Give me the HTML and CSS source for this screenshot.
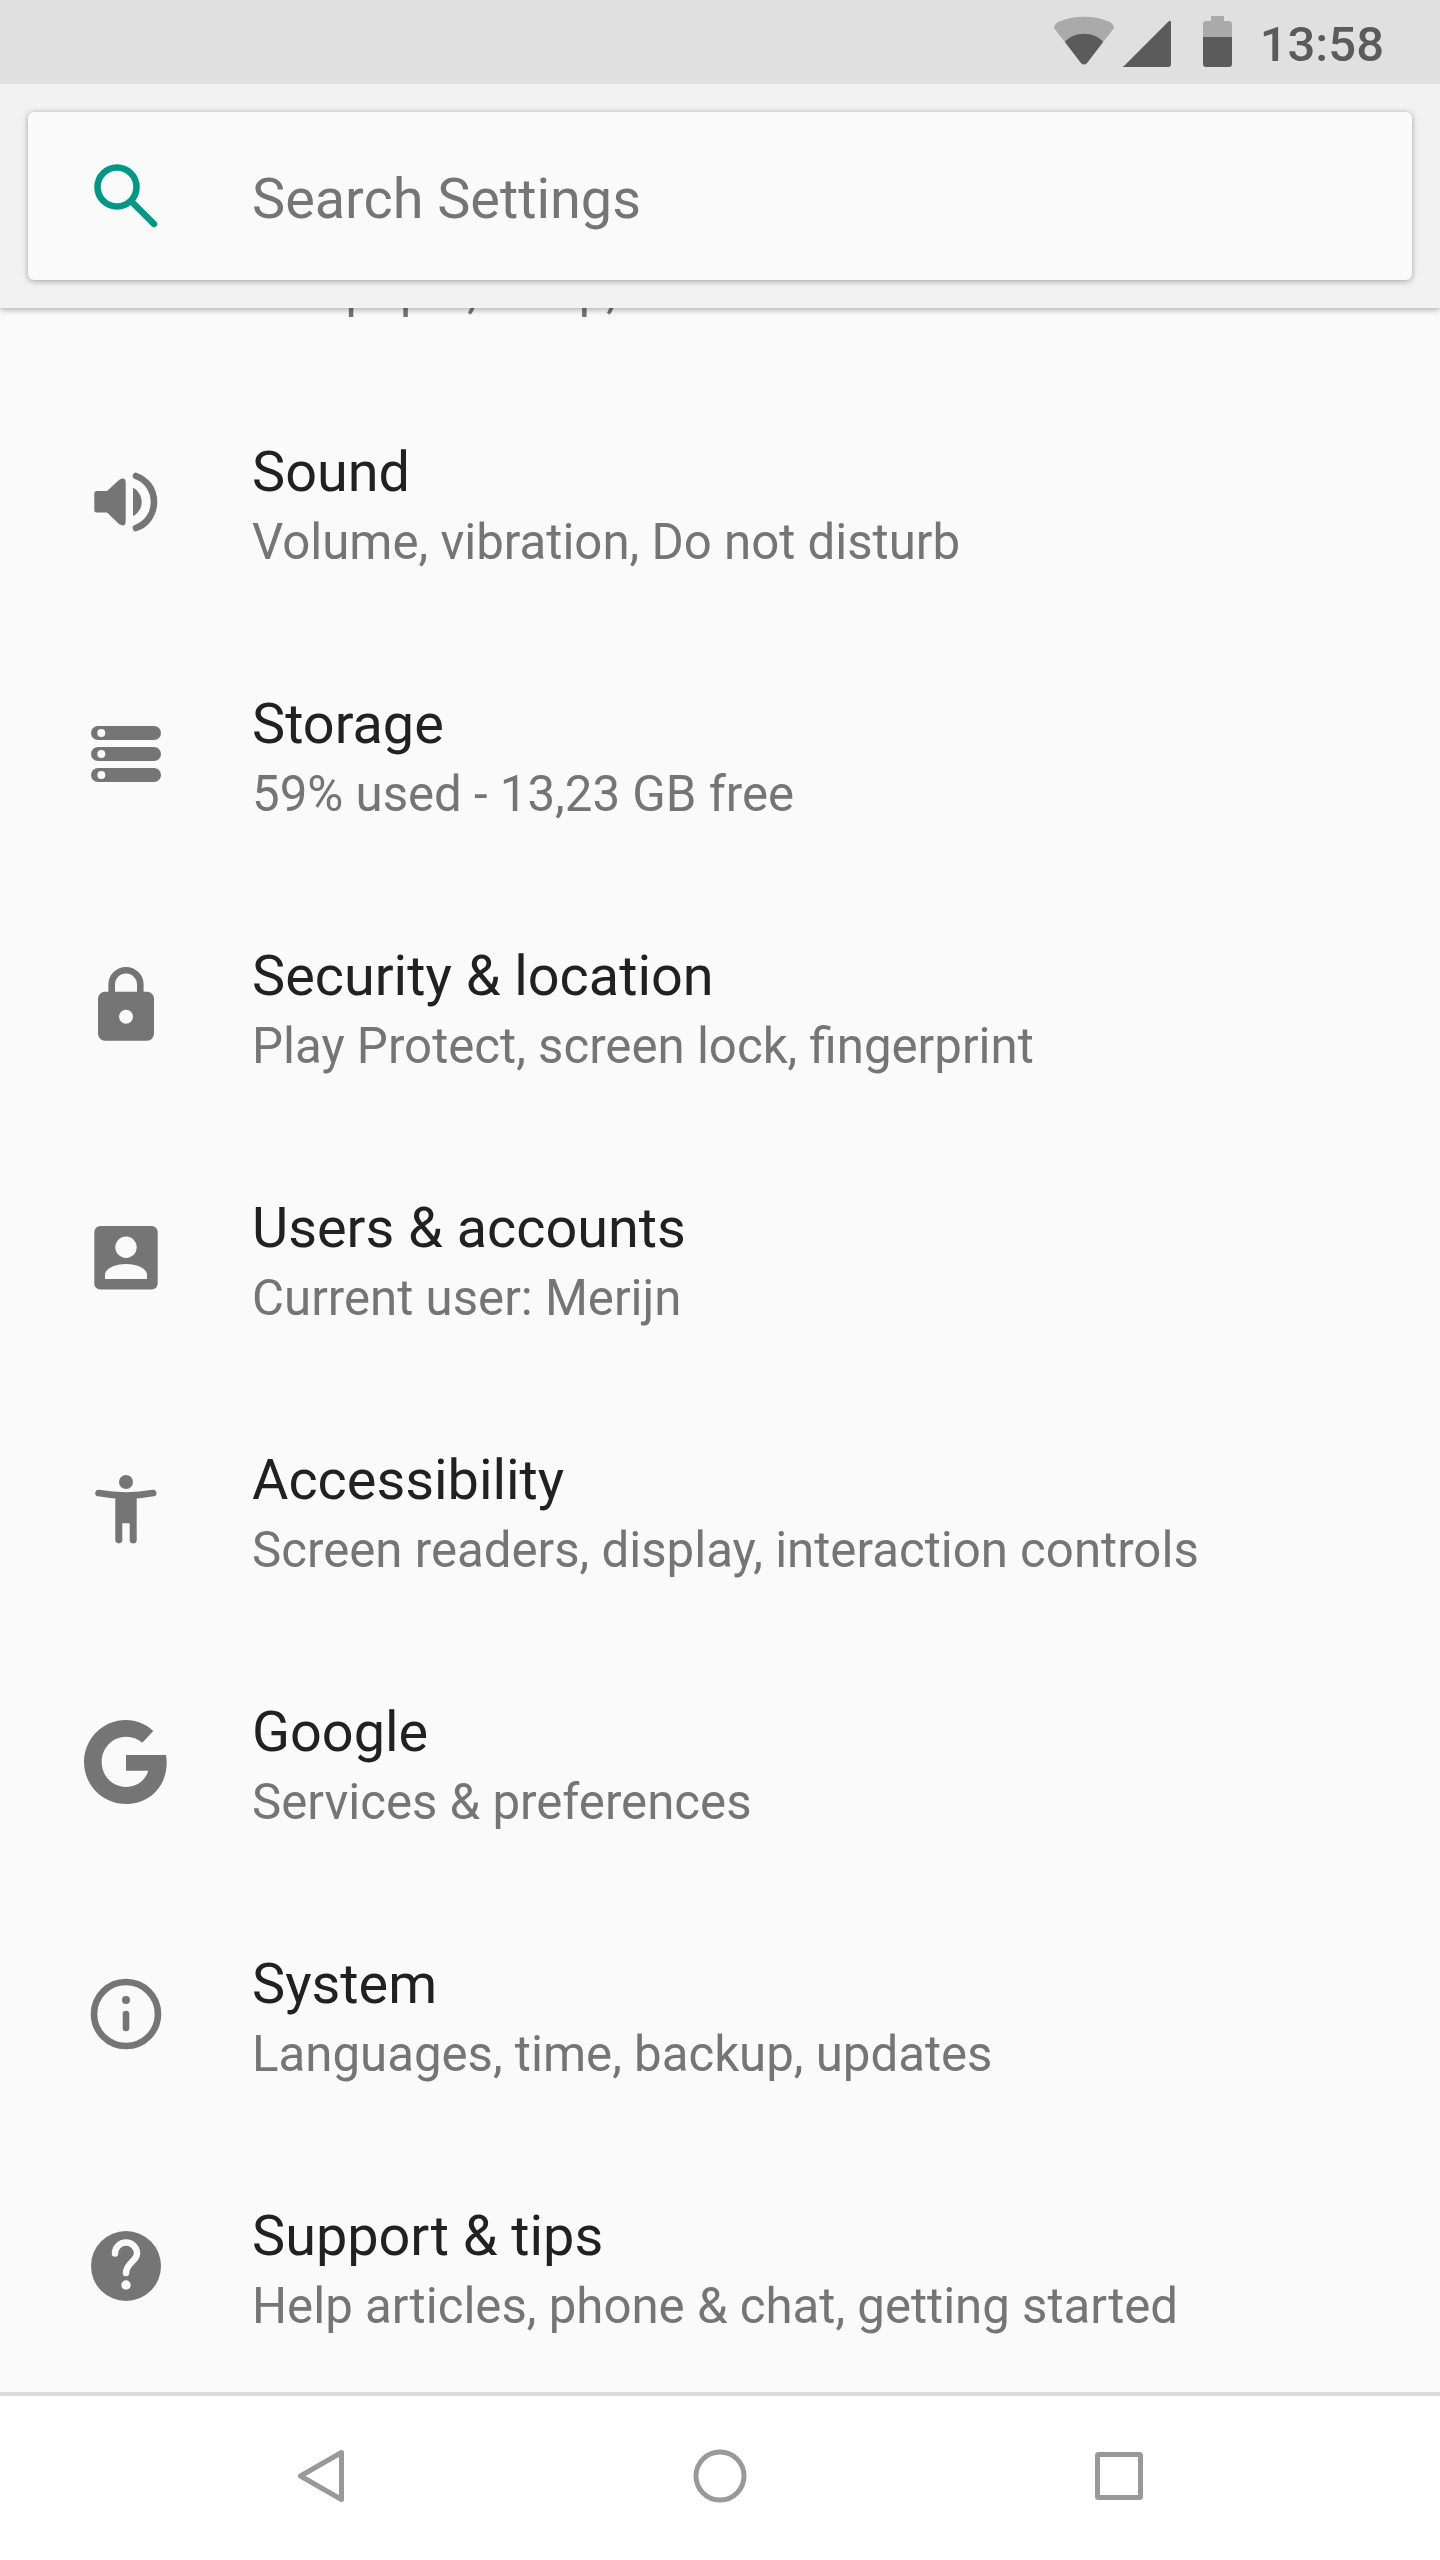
FILE: index.html
```html
<!DOCTYPE html>
<html lang="en">
<head>
  <meta charset="UTF-8" />
  <title>Settings</title>
  <link rel="stylesheet" href="styles.css">
</head>
<body>
  <div class="phone">
    <header class="status-bar">
      <svg class="status-icons" width="180" height="84" viewBox="0 0 180 84">
        <path class="dim" d="M2 28 Q2 25 6 22 C21 15 43 15 58 22 Q62 25 62 28 L36 62 Q32 66 28 62 Z"/>
        <path class="dark" d="M13 42 C21 31 43 31 51 42 L35 63 Q32 66 29 63 Z"/>
        <path class="dark" d="M72 66 L116 22 Q119 19 119 23 V64 Q119 67 116 67 H73 Q69 67 72 66 Z"/>
        <path class="dim" d="M159 16 H172 V21 H177 Q180 21 180 24 V37 H151 V24 Q151 21 154 21 H159 Z"/>
        <path class="dark" d="M151 37 H180 V64 Q180 67 177 67 H154 Q151 67 151 64 Z"/>
      </svg>
      <span class="clock">13:58</span>
    </header>

    <main class="content">
      <div class="search-panel">
        <div class="search-card">
          <svg class="icon" width="84" height="84" viewBox="0 0 84 84">
            <circle class="search-ring" cx="33" cy="33" r="19.5"/>
            <path class="search-handle" d="M50 50 L70 70"/>
          </svg>
          <span class="search-hint">Search Settings</span>
        </div>
      </div>

      <ul class="settings-list">
        <li class="row">
          <div class="row-icon"></div>
          <div class="row-text">
            <div class="row-title">&nbsp;</div>
            <div class="row-sub">Wallpaper, sleep, font size</div>
          </div>
        </li>
        <li class="row">
          <svg class="icon" width="84" height="84" viewBox="0 0 84 84">
            <path d="M12.5 31 H23 L35 20 Q41.7 16 41.7 23 V61 Q41.7 68 35 64 L23 52.5 H12.5 Q10.3 52.5 10.3 50 V33.5 Q10.3 31 12.5 31 Z"/>
            <path d="M49 27.7 C54 30 57.7 36 57.7 42 S54 54 49 56 Z"/>
            <path class="line" d="M52 16 C63 20 70 30 70 42 S63 64 52 68"/>
          </svg>
          <div class="row-text">
            <div class="row-title">Sound</div>
            <div class="row-sub">Volume, vibration, Do not disturb</div>
          </div>
        </li>
        <li class="row">
          <svg class="icon" width="84" height="84" viewBox="0 0 84 84">
            <rect x="7" y="14" width="70" height="14" rx="7"/>
            <rect x="7" y="35" width="70" height="14" rx="7"/>
            <rect x="7" y="56" width="70" height="14" rx="7"/>
            <circle class="cut" cx="17.3" cy="21" r="4"/>
            <circle class="cut" cx="17.3" cy="42" r="4"/>
            <circle class="cut" cx="17.3" cy="63" r="4"/>
          </svg>
          <div class="row-text">
            <div class="row-title">Storage</div>
            <div class="row-sub">59% used - 13,23 GB free</div>
          </div>
        </li>
        <li class="row">
          <svg class="icon" width="84" height="84" viewBox="0 0 84 84">
            <path class="line" d="M27.7 30 V20.5 A14.3 14.3 0 0 1 56.3 20.5 V30"/>
            <rect x="14" y="27.7" width="56" height="49" rx="7"/>
            <circle class="cut" cx="42" cy="52.7" r="7"/>
          </svg>
          <div class="row-text">
            <div class="row-title">Security &amp; location</div>
            <div class="row-sub">Play Protect, screen lock, fingerprint</div>
          </div>
        </li>
        <li class="row">
          <svg class="icon" width="84" height="84" viewBox="0 0 84 84">
            <rect x="10.3" y="10" width="63.4" height="63.4" rx="6"/>
            <circle class="cut" cx="42" cy="31.3" r="10.7"/>
            <path class="cut" d="M21 63 V59 C21 52 32 48 42 48 S63 52 63 59 V63 Z"/>
          </svg>
          <div class="row-text">
            <div class="row-title">Users &amp; accounts</div>
            <div class="row-sub">Current user: Merijn</div>
          </div>
        </li>
        <li class="row">
          <svg class="icon" width="84" height="84" viewBox="0 0 84 84">
            <circle cx="42" cy="14" r="7"/>
            <path class="line" d="M14.5 25 Q42 30 69.2 25"/>
            <path d="M31.3 27 H52.7 V73 A3.7 3.7 0 0 1 45.7 73 V55.3 H38.3 V73 A3.7 3.7 0 0 1 31.3 73 Z"/>
          </svg>
          <div class="row-text">
            <div class="row-title">Accessibility</div>
            <div class="row-sub">Screen readers, display, interaction controls</div>
          </div>
        </li>
        <li class="row">
          <svg class="icon" width="84" height="84" viewBox="0 0 84 84">
            <path d="M42 35 V50.7 H64.3 C61.5 60 53 67 42 67 C28.5 67 17.7 56 17.7 42 S28.5 16.7 42 16.7 C48.5 16.7 54 19 58.3 22.7 L69.3 11 C62 4 52.5 0 42 0 C18.8 0 0 18.8 0 42 S18.8 84 42 84 C65 84 82.7 67 82.7 42.5 C82.7 40 82.4 37.5 82 35 Z"/>
          </svg>
          <div class="row-text">
            <div class="row-title">Google</div>
            <div class="row-sub">Services &amp; preferences</div>
          </div>
        </li>
        <li class="row">
          <svg class="icon" width="84" height="84" viewBox="0 0 84 84">
            <circle class="line" cx="42" cy="42" r="32"/>
            <circle cx="42" cy="28" r="4"/>
            <path class="line" d="M42 42 V56"/>
          </svg>
          <div class="row-text">
            <div class="row-title">System</div>
            <div class="row-sub">Languages, time, backup, updates</div>
          </div>
        </li>
        <li class="row">
          <svg class="icon" width="84" height="84" viewBox="0 0 84 84">
            <circle cx="42" cy="42" r="35"/>
            <path class="cut-line" d="M31 29.5 A11 11 0 0 1 53 29.5 C53 37 42 39 42 49"/>
            <circle class="cut" cx="42" cy="61" r="4.7"/>
          </svg>
          <div class="row-text">
            <div class="row-title">Support &amp; tips</div>
            <div class="row-sub">Help articles, phone &amp; chat, getting started</div>
          </div>
        </li>
      </ul>
    </main>

    <nav class="nav-bar">
      <svg width="56" height="60" viewBox="0 0 56 60">
        <path class="nav-line" d="M48.5 6.5 V53.5 L7.5 30 Z"/>
      </svg>
      <svg width="60" height="60" viewBox="0 0 60 60">
        <circle class="nav-line" cx="30" cy="30" r="24"/>
      </svg>
      <svg width="56" height="60" viewBox="0 0 56 60">
        <rect class="nav-line" x="6.5" y="8.5" width="43" height="43" rx="1"/>
      </svg>
    </nav>
  </div>
</body>
</html>
```

FILE: styles.css
```css
* {
  box-sizing: border-box;
}
body {
  margin: 0;
  background-color: #fafafa;
  font-family: Roboto, sans-serif;
}
.phone {
  width: 1440px;
  height: 2560px;
  display: flex;
  flex-direction: column;
  overflow: hidden;
}

/* status bar */
.status-bar {
  height: 84px;
  flex: none;
  display: flex;
  align-items: center;
  justify-content: flex-end;
  padding-right: 56px;
  background-color: #e0e0e0;
}
.status-icons {
  margin-right: 28px;
}
.status-icons .dim { fill: #aaa; }
.status-icons .dark { fill: #5b5b5b; }
.clock {
  padding-top: 5px;
  font-size: 49px;
  font-weight: 500;
  color: #5b5b5b;
}

/* list area */
.content {
  flex: 1;
  position: relative;
  overflow: hidden;
  background-color: #fafafa;
}
.search-panel {
  position: absolute;
  top: 0;
  left: 0;
  right: 0;
  height: 224px;
  padding: 28px;
  background-color: #f2f2f2;
  box-shadow: 0 2px 6px rgba(0, 0, 0, 0.3);
  z-index: 1;
}
.search-card {
  height: 168px;
  display: flex;
  align-items: center;
  padding-left: 56px;
  border-radius: 6px;
  background-color: #fafafa;
  box-shadow: 0 1px 6px rgba(0, 0, 0, 0.35);
}
.search-ring {
  fill: none;
  stroke: #009688;
  stroke-width: 6.5px;
}
.search-handle {
  fill: none;
  stroke: #009688;
  stroke-width: 6.5px;
  stroke-linecap: round;
}
.search-hint {
  margin-left: 84px;
  padding-top: 6px;
  font-size: 55.8px;
  color: #757575;
}
.settings-list {
  list-style: none;
  margin: 0;
  padding: 40px 0 0;
}
.row {
  height: 252px;
  display: flex;
  align-items: center;
  padding-left: 84px;
}
.row-icon {
  width: 84px;
  height: 84px;
}
.row-text {
  margin-left: 84px;
  padding-top: 10px;
}
.row-title {
  font-size: 55.8px;
  line-height: 70px;
  color: #212121;
}
.row-sub {
  font-size: 49.2px;
  line-height: 70px;
  color: #757575;
}
.icon {
  flex: none;
  fill: #757575;
}
.line {
  fill: none;
  stroke: #757575;
  stroke-width: 6.6px;
  stroke-linecap: round;
}
.cut { fill: #fafafa; }
.cut-line {
  fill: none;
  stroke: #fafafa;
  stroke-width: 6.5px;
  stroke-linecap: round;
}

/* nav bar */
.nav-bar {
  height: 168px;
  flex: none;
  display: flex;
  align-items: center;
  justify-content: center;
  gap: 341px;
  padding-bottom: 5px;
  background-color: #fff;
  border-top: 4px solid #dcdcdc;
}
.nav-line {
  fill: none;
  stroke: #999;
  stroke-width: 5px;
  stroke-linejoin: round;
}
```
